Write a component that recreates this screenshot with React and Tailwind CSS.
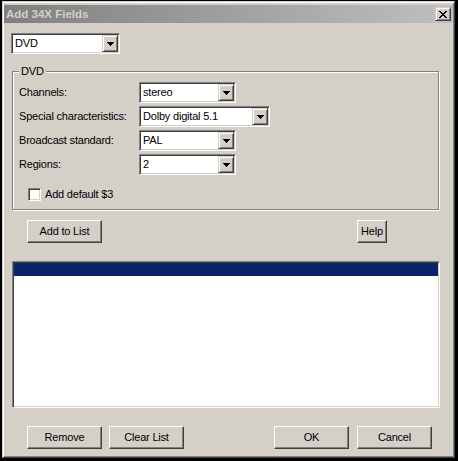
const raised = 'border border-t-white border-l-white border-b-[#404040] border-r-[#404040] shadow-[inset_-1px_-1px_0_#808080]';
const raisedSmall = 'border border-t-[#d4d0c8] border-l-[#d4d0c8] border-b-[#404040] border-r-[#404040] shadow-[inset_1px_1px_0_#fff,inset_-1px_-1px_0_#808080]';
const sunken = 'border border-t-[#808080] border-l-[#808080] border-b-white border-r-white shadow-[inset_1px_1px_0_#404040,inset_-1px_-1px_0_#d4d0c8]';

// pixel glyphs: [x, y, width] runs of 1px height
const closeGlyph = [
  [0, 0, 2], [6, 0, 2],
  [1, 1, 2], [5, 1, 2],
  [2, 2, 4],
  [3, 3, 2],
  [2, 4, 4],
  [1, 5, 2], [5, 5, 2],
  [0, 6, 2], [6, 6, 2],
];
const arrowGlyph = [[0, 0, 7], [1, 1, 5], [2, 2, 3], [3, 3, 1]];

const Pixels = ({ runs, w, h }) => (
  <svg width={w} height={h} viewBox={`0 0 ${w} ${h}`} shapeRendering="crispEdges">
    {runs.map(([x, y, rw], i) => (
      <rect key={i} x={x} y={y} width={rw} height={1} fill="#000" />
    ))}
  </svg>
);

const Combo = ({ value, width }) => (
  <div className={`flex h-[21px] shrink-0 bg-white p-px ${sunken} ${width}`}>
    <span className="flex-1 pl-[2px] leading-[17px] truncate">{value}</span>
    <span className={`flex h-[17px] w-[16px] items-center justify-center bg-[#d4d0c8] ${raisedSmall}`}>
      <Pixels runs={arrowGlyph} w={7} h={4} />
    </span>
  </div>
);

const Button = ({ children, width = 'w-[75px]', className = '' }) => (
  <button className={`h-[23px] shrink-0 bg-[#d4d0c8] text-black leading-[21px] ${width} ${raised} ${className}`}>
    {children}
  </button>
);

const Row = ({ label, children, className = '' }) => (
  <div className={`flex items-center h-[21px] ${className}`}>
    <span className="w-[120px] shrink-0">{label}</span>
    {children}
  </div>
);

export default function App() {
  return (
    <div className="w-[458px] h-[461px] bg-black pl-[2px] pt-px font-['Liberation_Sans',Arial,sans-serif] text-[11px] tracking-[-0.2px] text-black select-none">
      <div className="w-[453px] h-[457px] flex flex-col bg-[#d4d0c8] border border-t-[#d4d0c8] border-l-[#d4d0c8] border-b-[#404040] border-r-[#404040] shadow-[inset_1px_1px_0_#fff,inset_-1px_-1px_0_#808080] pt-[3px] px-px">
        {/* caption */}
        <div className="flex h-[18px] shrink-0 items-center bg-gradient-to-r from-[#808080] to-[#c0c0c0] pl-[2px] pr-[2px]">
          <span className="flex-1 font-bold text-[11.5px] tracking-normal text-[#d4d0c8] leading-[18px]">Add 34X Fields</span>
          <span className={`flex h-[14px] w-[16px] items-center justify-center bg-[#d4d0c8] ${raisedSmall}`}>
            <Pixels runs={closeGlyph} w={8} h={7} />
          </span>
        </div>

        <div className="flex flex-col">
          <div className="ml-[7px] mt-[10px]">
            <Combo value="DVD" width="w-[109px]" />
          </div>

          <fieldset className="ml-[8px] mt-[11px] w-[427px] border border-[#808080] shadow-[1px_1px_0_#fff,inset_1px_1px_0_#fff] pl-[6px] pt-[4px] pb-[8px]">
            <legend className="px-[2px] leading-[13px] bg-[#d4d0c8]">DVD</legend>
            <Row label="Channels:">
              <Combo value="stereo" width="w-[97px]" />
            </Row>
            <Row label="Special characteristics:" className="mt-[3px]">
              <Combo value="Dolby digital 5.1" width="w-[131px]" />
            </Row>
            <Row label="Broadcast standard:" className="mt-[3px]">
              <Combo value="PAL" width="w-[97px]" />
            </Row>
            <Row label="Regions:" className="mt-[3px]">
              <Combo value="2" width="w-[97px]" />
            </Row>
            <label className="ml-[9px] mt-[13px] flex h-[13px] items-center">
              <span className={`h-[13px] w-[13px] shrink-0 bg-white ${sunken}`} />
              <span className="ml-[4px]">Add default $3</span>
            </label>
          </fieldset>

          <div className="mt-[10px] flex">
            <Button className="ml-[23px]">Add to List</Button>
            <Button width="w-[30px]" className="ml-[255px]">Help</Button>
          </div>

          <div className={`ml-[8px] mt-[18px] h-[147px] w-[428px] bg-white p-px ${sunken}`}>
            <div className="h-[13px] bg-[#0a246a]" />
          </div>

          <div className="mt-[18px] flex">
            <Button className="ml-[23px]">Remove</Button>
            <Button className="ml-[7px]">Clear List</Button>
            <Button className="ml-[90px]">OK</Button>
            <Button className="ml-[8px]">Cancel</Button>
          </div>
        </div>
      </div>
    </div>
  );
}
